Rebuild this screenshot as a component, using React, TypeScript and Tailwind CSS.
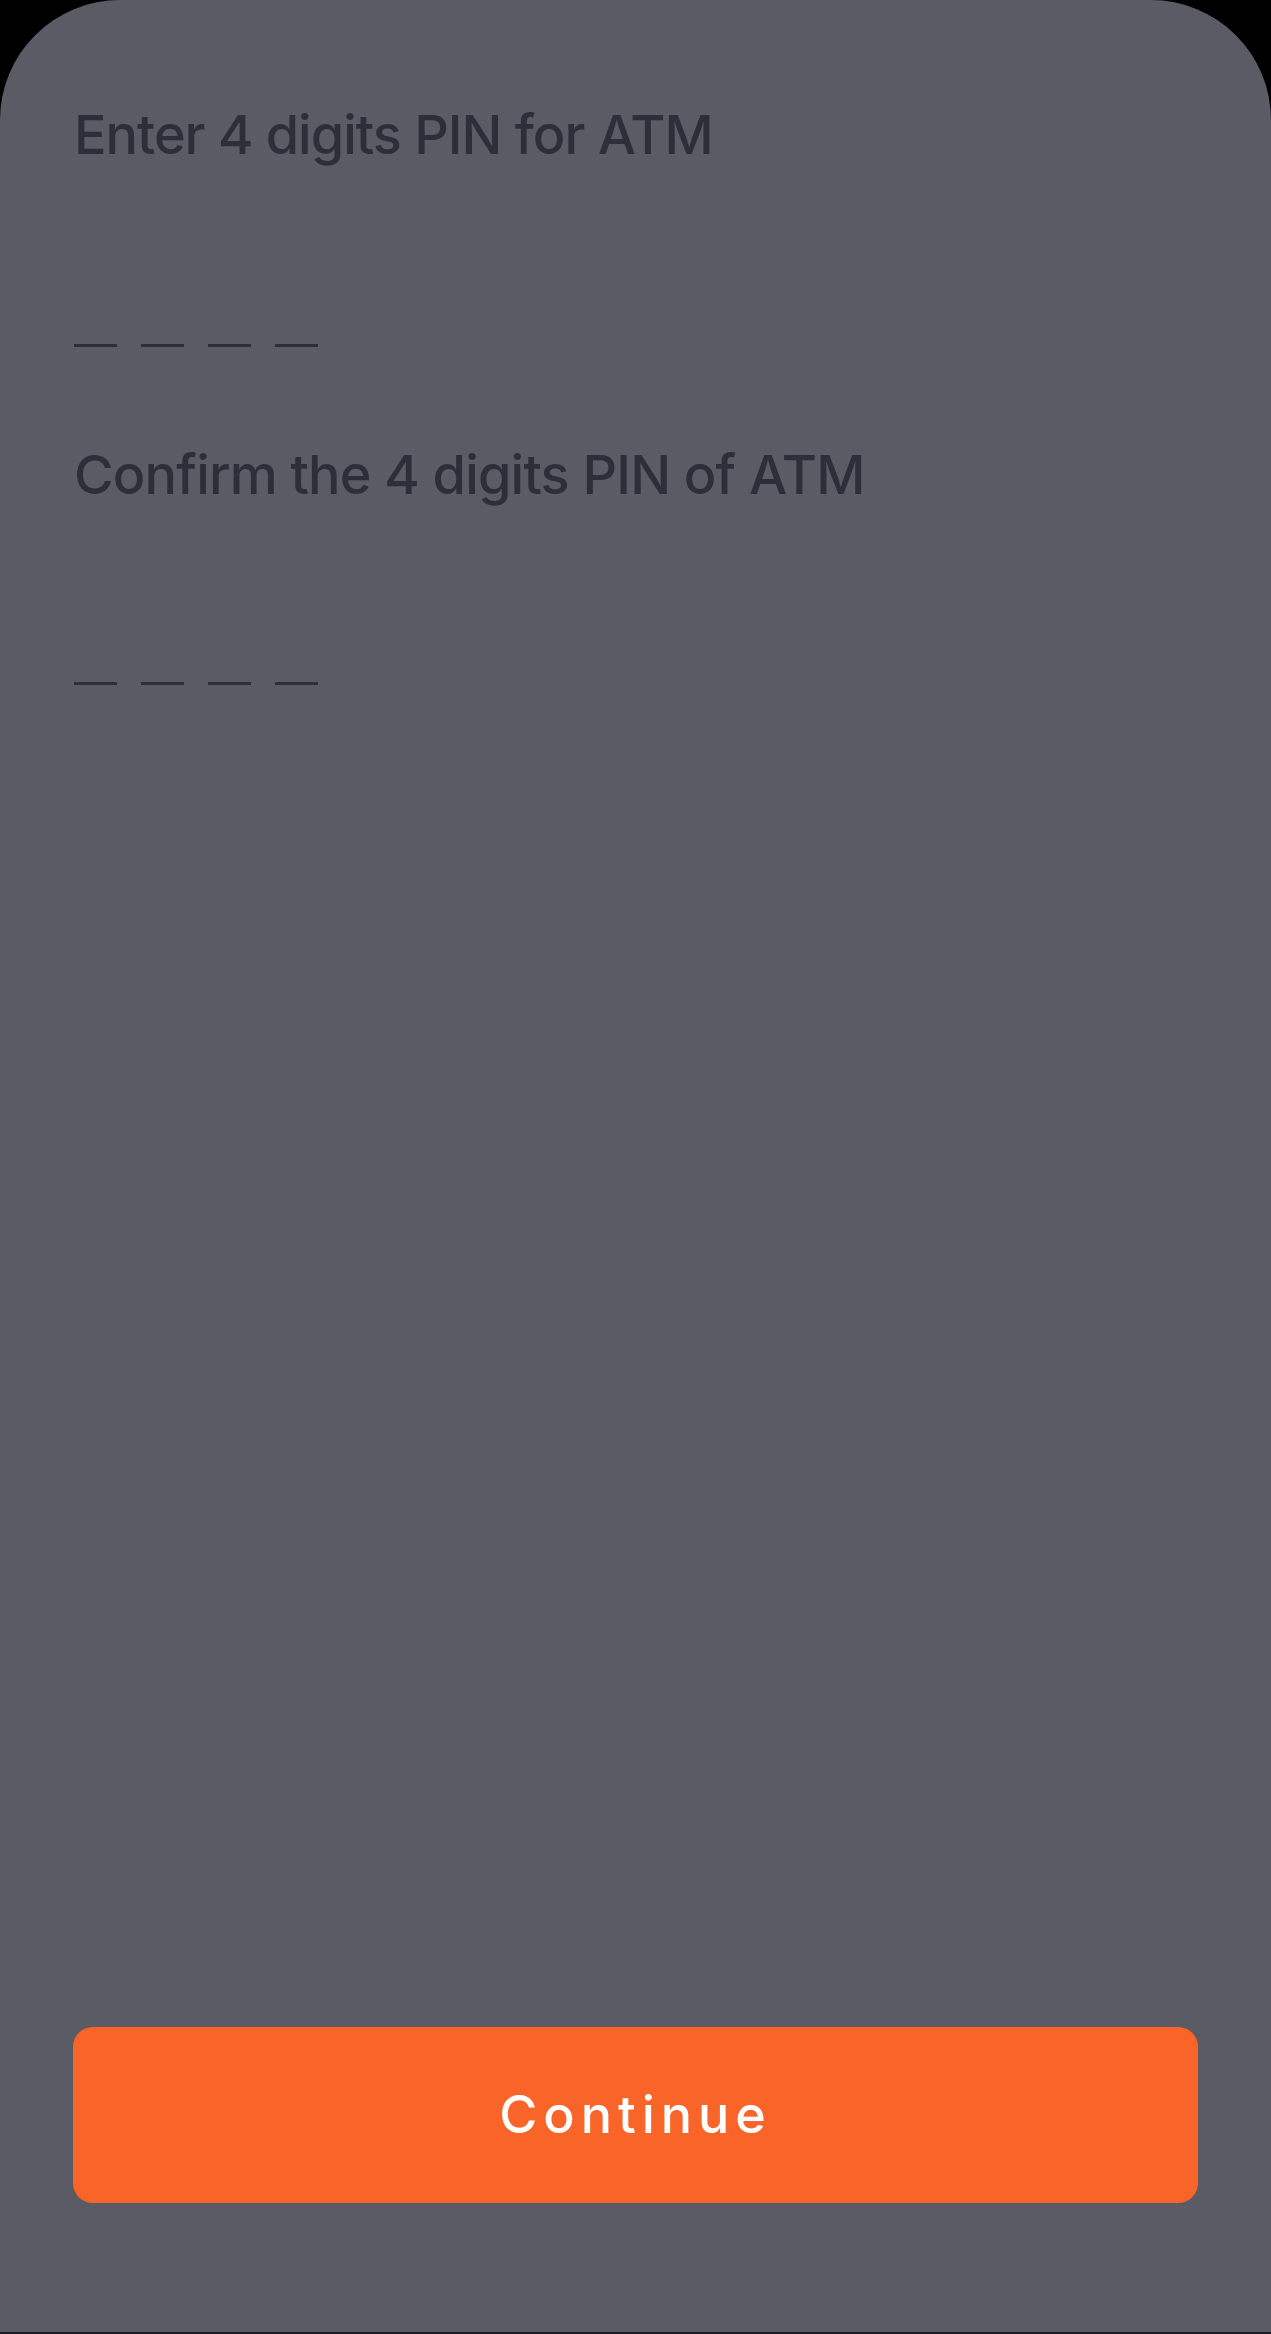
import { useState } from 'react';

function PinSlots() {
  return (
    <div className="flex gap-[24px]">
      {[0, 1, 2, 3].map((i) => (
        <div key={i} className="h-[3px] w-[43px] bg-[#2e2e3b]" />
      ))}
    </div>
  );
}

function App() {
  const [pin] = useState('');

  return (
    <div className="h-[2334px] w-full bg-black" style={{ fontFamily: 'Inter, "Noto Sans", sans-serif' }}>
      <div className="flex h-full flex-col rounded-t-[120px] border-b-2 border-[#1c1c22] bg-[#5b5b66] px-[74px]">
        <h1 className="pt-[108px] text-[54px] font-medium leading-[54px] tracking-[-1px] text-[#2e2e3b]">
          Enter 4 digits PIN for ATM
        </h1>
        <div className="mt-[182px]">
          <PinSlots />
        </div>

        <h1 className="mt-[101px] text-[54px] font-medium leading-[54px] tracking-[-0.8px] text-[#2e2e3b]">
          Confirm the 4 digits PIN of ATM
        </h1>
        <div className="mt-[180px]">
          <PinSlots />
        </div>

        <button
          disabled={pin.length < 4 && false}
          className="mt-auto mb-[129px] -mx-px flex h-[176px] items-center justify-center rounded-[20px] bg-[#f96528] text-[52px] font-medium tracking-[6px] text-white"
        >
          Continue
        </button>
      </div>
    </div>
  );
}

export default App;
